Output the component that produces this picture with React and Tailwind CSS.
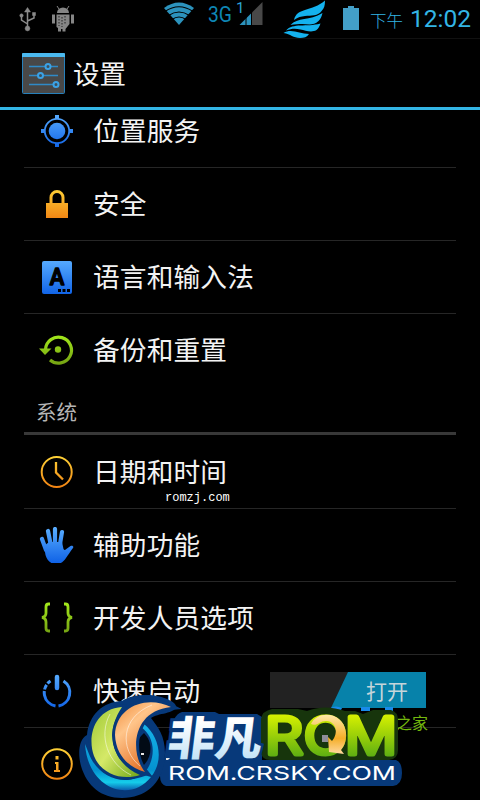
import React from 'react';

const BLUE = 'url(#blue)';
const AMBER = 'url(#amber)';
const GREEN = 'url(#green)';

// Shared gradients for every icon
function Gradients() {
  return (
    <svg width="0" height="0" className="absolute">
      <defs>
        <linearGradient id="blue" gradientUnits="userSpaceOnUse" x1="0" y1="0" x2="0" y2="36">
          <stop offset="0" stopColor="#5aaeff" /><stop offset="1" stopColor="#0f62e6" />
        </linearGradient>
        <linearGradient id="amber" gradientUnits="userSpaceOnUse" x1="0" y1="0" x2="0" y2="36">
          <stop offset="0" stopColor="#ffd83a" /><stop offset="1" stopColor="#f07d10" />
        </linearGradient>
        <linearGradient id="green" gradientUnits="userSpaceOnUse" x1="0" y1="0" x2="0" y2="36">
          <stop offset="0" stopColor="#a8f01c" /><stop offset="1" stopColor="#6f9a12" />
        </linearGradient>
      </defs>
    </svg>
  );
}

function Icon({ children }) {
  return <svg width="36" height="36" viewBox="0 0 36 36" fill="none" className="shrink-0">{children}</svg>;
}

const LocationIcon = () => (
  <Icon>
    <circle cx="18" cy="18" r="12.2" stroke={BLUE} strokeWidth="1.8" />
    <circle cx="18" cy="18" r="8.3" fill={BLUE} />
    <path d="M16 2h4v4h-4zM16 30h4v4h-4zM2 16h4v4h-4zM30 16h4v4h-4z" fill={BLUE} />
  </Icon>
);

const LockIcon = () => (
  <Icon>
    <path d="M12 18V11.5a6 6 0 0 1 12 0V18" stroke={AMBER} strokeWidth="3" />
    <path d="M7 17h22v15H7z" fill={AMBER} />
  </Icon>
);

const LanguageIcon = () => (
  <Icon>
    <rect x="3" y="2" width="30" height="33" rx="2" fill={BLUE} />
    <text x="18" y="26" textAnchor="middle" fontSize="22" fontWeight="700" stroke="#000" strokeWidth="1.5" strokeLinejoin="round" fill="#000" fontFamily="Lato, sans-serif" textLength="14" lengthAdjust="spacingAndGlyphs">A</text>
    <path d="M19 30h3v3h-3zM23.500 30h3v3h-3zM28 30h3v3h-3z" fill="#000" />
  </Icon>
);

const BackupIcon = () => (
  <Icon>
    <path d="M6.5 17.500A13 13 0 1 1 11 28" stroke={GREEN} strokeWidth="3.2" />
    <path d="M0 16.500h12.5L6 23z" fill={GREEN} />
    <circle cx="19" cy="17.500" r="3.200" fill={GREEN} />
  </Icon>
);

const ClockIcon = () => (
  <Icon>
    <circle cx="17.700" cy="18" r="15" stroke={AMBER} strokeWidth="2" />
    <path d="M17 8v10.500l7 7" stroke={AMBER} strokeWidth="2.300" />
  </Icon>
);

const HandIcon = () => (
  <Icon>
    <path d="M3 12l4 11M9 4l3 15M16 2v18M23 5L20.500 20" stroke={BLUE} strokeWidth="4.200" strokeLinecap="round" />
    <path d="M5 19L10 15h13l1.500 7c1 1.500 2 1 3.500-.5l3.500-2.500c2-1 3.500.5 2.500 2-3 4-5 7-7 10-3 4.500-6 6-10 6-6 0-9-4-10.500-9z" fill={BLUE} />
  </Icon>
);

const BracesIcon = () => (
  <Icon>
    <path d="M11 4H9.500C7.500 4 7 5 7 7v6c0 3-1 4-4 4.500 3 .5 4 1.500 4 4.500v6c0 2 .5 3 2.500 3H11M25 4h1.500c2 0 2.500 1 2.500 3v6c0 3 1 4 4 4.500-3 .5-4 1.500-4 4.500v6c0 2-.5 3-2.500 3H25" stroke={GREEN} strokeWidth="2.800" />
  </Icon>
);

const PowerIcon = () => (
  <Icon>
    <path d="M24.500 8a13.700 13.700 0 0 1-5 25" stroke={BLUE} strokeWidth="3" />
    <path d="M11.500 8a13.700 13.700 0 0 0 5 25" stroke={BLUE} strokeWidth="3" strokeDasharray="4 1.500 5 1.500 40" />
    <path d="M18 4v11" stroke={BLUE} strokeWidth="4.500" strokeLinecap="round" />
  </Icon>
);

const InfoIcon = () => (
  <Icon>
    <circle cx="18" cy="18" r="14.800" stroke={AMBER} strokeWidth="2" />
    <path d="M16.500 10h3v3.500h-3zM16 16h3.500v8h1.500v2h-6v-2H17v-6h-1z" fill={AMBER} />
  </Icon>
);

const DEVICE = [
  { label: '位置服务', icon: LocationIcon },
  { label: '安全', icon: LockIcon },
  { label: '语言和输入法', icon: LanguageIcon },
  { label: '备份和重置', icon: BackupIcon },
];

const SYSTEM = [
  { label: '日期和时间', icon: ClockIcon },
  { label: '辅助功能', icon: HandIcon },
  { label: '开发人员选项', icon: BracesIcon },
  { label: '快速启动', icon: PowerIcon, toggle: true },
  { label: '', icon: InfoIcon },
];

function StatusBar() {
  return (
    <header className="flex h-[39px] shrink-0 items-start border-b border-[#111] text-[#33b5e5]">
      <svg width="282" height="38" viewBox="0 0 282 38" fill="none" className="shrink-0">
        <g stroke="#8a8a8a" strokeWidth="1.5">
          <path d="M27.500 11v18M27.500 24l-6-4v-5M27.500 21l6.500-3v-4" />
          <path d="M24.500 12l3-4.500 3 4.500zM32.500 12.500h3v3h-3z" fill="#8a8a8a" strokeWidth=".5" />
          <circle cx="27.500" cy="28.500" r="2.400" fill="#8a8a8a" strokeWidth=".5" />
          <circle cx="21.500" cy="15.500" r="1.700" fill="#8a8a8a" strokeWidth=".5" />
        </g>
        <g fill="#858585">
          <path d="M57 13a6 5.500 0 0 1 12 0zM52 14.500h3v9h-3zM71 14.500h3v9h-3zM56.500 14.500h13V24l-4 5v2.500h-3V29h-1.500v2.500h-3V28l-1.500-1z" />
          <path d="M59 9l-2-3M67 9l2-3" stroke="#858585" />
          <path d="M59 16v10M62 17v10M65 16v8" stroke="#222" strokeDasharray="1.500 1.500" />
        </g>
        <path d="M164 8q15-11 30 0l-15 17z" fill="#2c93bd" />
        <path d="M165 11.500q14-9.500 28 0M168.500 15.500q10.500-7 21 0M172 19.500q7-5 14 0" stroke="#000" strokeWidth="1.200" />
        <text x="208" y="22" fontSize="22.500" fill="#0e86b4" fontFamily="Roboto, sans-serif" textLength="24" lengthAdjust="spacingAndGlyphs">3G</text>
        <text x="236" y="12.500" fontSize="15" fill="#2ca3d3" fontFamily="Roboto, sans-serif">1</text>
        <path d="M239.500 25l12-12v12z" fill="#2c93bd" />
        <path d="M252 12.500l10.500-10.500V25H252z" fill="#484848" />
        <path d="M246 15v10M251.500 12v13" stroke="#000" />
      </svg>
      <div className="flex w-full">
        <svg width="88" height="38" viewBox="282 0 88 38" fill="#14b2ee" className="shrink-0">
          <path d="M294 20C297 7 312 12 325 .5c0 5-1 8-3 10-4 6-11 5-17 5.500-4 .5-7 1-11 4z" />
          <path d="M290.500 25c7-8 19-4 32-12-1 4-2 6-4 8-5 5-11 3-16 3-4 0-8 0-12 1z" />
          <path d="M286 30.500c7-8 20-3 34.500-7-1 3-2 5-4 6.500-5 3-11 .5-16-.5-5-1-9-1-14.500 1z" />
          <path d="M283.500 33c8-5 16 1 25.500 1-2 3-5 4-9 4-7 0-9-4-16.500-5z" />
          <path d="M343 8h5V6h6v2h5v22h-16z" fill="#439fc8" />
        </svg>
        <span className="mt-2 w-10 shrink-0 whitespace-nowrap font-['Noto_Sans_CJK_SC',sans-serif] text-[16.500px] font-light leading-6">下午</span>
        <span className="mt-1 whitespace-nowrap font-[Roboto,sans-serif] text-[24.500px] leading-[30px]">12:02</span>
      </div>
    </header>
  );
}

function TitleBar() {
  return (
    <div className="flex h-[71px] shrink-0 items-center gap-2 border-b-[3px] border-[#33b5e5] pl-[21px]">
      <svg width="44" height="44" viewBox="0 0 44 44" fill="none">
        <rect x="1.500" y="2.500" width="42" height="40" rx="1" fill="#484848" stroke="#2680bb" />
        <path d="M1 3q0-1 1-1h41q1 0 1 1v3H1z" fill="#4bb9ef" />
        <path d="M8 15.500h29M8 24.500h29M8 33.500h29" stroke="#2f8ac8" strokeWidth="1.500" />
        <g fill="#3c4f5c" stroke="#3ba2e6" strokeWidth="2">
          <circle cx="27" cy="15.500" r="2.500" /><circle cx="19.500" cy="24.500" r="2.500" /><circle cx="35" cy="33.500" r="2.500" />
        </g>
      </svg>
      <h1 className="pb-px text-[26.500px] leading-9">设置</h1>
    </div>
  );
}

function Row({ item }) {
  const ItemIcon = item.icon;
  return (
    <li className="mx-6 flex h-[73px] items-center border-b border-[#262626] pl-[15px]">
      <ItemIcon />
      {item.label && <span className="ml-[18px] whitespace-nowrap pb-[3px] text-[26.700px] leading-9 tracking-[0.15px]">{item.label}</span>}
      {item.toggle && (
        <div className="mt-[-2px] mr-[30px] ml-auto flex h-9 w-[156px] bg-[#222]">
          <div className="ml-auto flex w-[95px] items-center justify-end bg-[#0782aa] pr-[18px] pt-0.5 text-[21px] text-[#c5d5da] [clip-path:polygon(17px_0,100%_0,100%_100%,0_100%)]">打开</div>
        </div>
      )}
    </li>
  );
}

function Watermark() {
  return (
    <svg width="370" height="120" viewBox="70 680 370 120" fill="none" className="absolute top-[680px] left-[70px]">
      <defs>
        <linearGradient id="leaf" x1="0" y1="0" x2="1" y2="1">
          <stop offset="0" stopColor="#9fc935" /><stop offset=".5" stopColor="#d5e968" /><stop offset="1" stopColor="#6fa516" />
        </linearGradient>
        <linearGradient id="flame" x1="0" y1="0" x2=".7" y2="1">
          <stop offset="0" stopColor="#f08a38" /><stop offset=".35" stopColor="#ffc58a" /><stop offset="1" stopColor="#dd5f12" />
        </linearGradient>
        <linearGradient id="ring" x1="0" y1="0" x2="0" y2="1">
          <stop offset="0" stopColor="#16b3ea" /><stop offset=".7" stopColor="#0492d0" /><stop offset=".88" stopColor="#15cdea" /><stop offset="1" stopColor="#0a5fb0" />
        </linearGradient>
        <linearGradient id="ice" x1="0" y1="0" x2="0" y2="1">
          <stop offset=".3" stopColor="#fff" /><stop offset="1" stopColor="#b5ddf5" />
        </linearGradient>
        <linearGradient id="lime" gradientUnits="userSpaceOnUse" x1="0" y1="715" x2="0" y2="757">
          <stop offset="0" stopColor="#d6f000" /><stop offset="1" stopColor="#5cae12" />
        </linearGradient>
        <linearGradient id="arrow" x1="0" y1="0" x2="0" y2="1">
          <stop offset="0" stopColor="#ffe9a8" /><stop offset=".6" stopColor="#f5ae28" /><stop offset="1" stopColor="#ffd9a0" />
        </linearGradient>
      </defs>

      <path d="M331 710q5-3 10 0M361 709h9M385 709h8" stroke="#1a8bea" strokeWidth="4" />
      <text x="396" y="729" fontSize="16" fill="#73b80d" fontFamily="'Noto Sans CJK SC', sans-serif">之家</text>

      {/* dark plates behind the lettering */}
      <path d="M182 712h33l4 2h38l5 3v43h134q6 2 6 13 0 12-9 13H166q-6-2-6-10 0-10 4-16 2-16 7-25 1-20 11-23z" fill="#07397a" />
      <path d="M272 709h26l9 2q18-7 38 0h10l8 3 10-4h18q7 2 7 10v30q0 9-9 10H270q-8 0-9-8v-33q1-8 11-10z" fill="#17350c" />

      {/* swirl */}
      <path d="M122 701C102 702 89 715 87 735c-9 5-9 20-6 31 6 20 20 32 41 32 27 0 43-19 43-45 0-17-7-26-14-35 6-5 25-4 25-12-1-6-20-12-30-11-10 0-18 2-24 6z" fill="#07397a" />
      <path d="M144 733c-11 10-11 23-2 34 11-10 11-25 2-34z" fill="#020b16" />
      <path d="M144 724C160 737 164 761 151 777 131 803 88 790 85 744l4 10C99 780 132 790 148 768c8-14 6-32-7-41z" fill="url(#ring)" />
      <path d="M122 707C94 709 87 737 94 756c7 18 28 25 46 19C114 764 103 735 122 707z" fill="url(#leaf)" stroke="#07397a" strokeWidth="5" paintOrder="stroke" />
      <path d="M171 707C147 695 116 706 115 735c1 20 13 32 30 37C130 754 131 711 171 707z" fill="url(#flame)" stroke="#07397a" strokeWidth="6" paintOrder="stroke" />
      <path d="M110 714c-12 22-2 50 21 61M152 705c-31 12-33 44-12 61" stroke="#fff" strokeOpacity=".5" />
      <path d="M141 753h3v2h-3zM166 758h4l-2 2h-2z" fill="#e8e8e8" />

      <text x="167" y="755" fontSize="46" fontWeight="900" fill="url(#ice)" stroke="#07397a" strokeWidth="6" paintOrder="stroke" fontFamily="'Noto Sans CJK SC', sans-serif" textLength="94" lengthAdjust="spacingAndGlyphs" transform="translate(92 0) skewX(-7)">非凡</text>
      <g fill="url(#lime)" stroke="url(#lime)" strokeWidth="5" strokeLinejoin="round" strokeLinecap="round" fontFamily="Inter, sans-serif" fontWeight="300" fontSize="50">
        <text x="265" y="754" textLength="38" lengthAdjust="spacingAndGlyphs">R</text>
        <text x="304" y="754" textLength="43" lengthAdjust="spacingAndGlyphs">O</text>
        <text x="345" y="754" textLength="52" lengthAdjust="spacingAndGlyphs">M</text>
      </g>
      <path d="M311 724c6-14 33-13 35 9 0 10-2 13-5 17l3 4-15-2-1-15 4 4c7-8 4-19-5-20-7-1-10 6-16 3z" fill="url(#arrow)" />
      <path d="M322 735h6v7h-6z" fill="#8f8d98" />
      <text x="168" y="779.500" fontSize="19" fill="#fff" fontFamily="Inter, sans-serif" textLength="228" lengthAdjust="spacingAndGlyphs">ROM.CRSKY.COM</text>
    </svg>
  );
}

export default function App() {
  return (
    <div className="relative flex h-[800px] w-[480px] flex-col overflow-hidden bg-black font-['Noto_Sans_CJK_SC',sans-serif] text-[#f3f3f3]">
      <Gradients />
      <StatusBar />
      <TitleBar />
      <main className="min-h-0 flex-1 overflow-hidden">
        {/* list is scrolled slightly under the title bar */}
        <ul className="-mt-[15px]">
          {DEVICE.map((item, i) => (
            <div key={item.label} className={i === DEVICE.length - 1 ? '-mb-px [&>li]:border-black' : ''}><Row item={item} /></div>
          ))}
        </ul>
        <h2 className="mx-6 flex h-[49px] items-center border-b-[3px] border-[#383838] pt-1 pl-3 text-[20.500px] text-[#b5b5b5]">系统</h2>
        <ul className="pt-px">
          {SYSTEM.map((item) => <Row key={item.label} item={item} />)}
        </ul>
      </main>
      <span className="absolute top-[490px] left-[165px] font-['Liberation_Mono',monospace] text-[12px] leading-4 text-white">romzj.com</span>
      <Watermark />
    </div>
  );
}
